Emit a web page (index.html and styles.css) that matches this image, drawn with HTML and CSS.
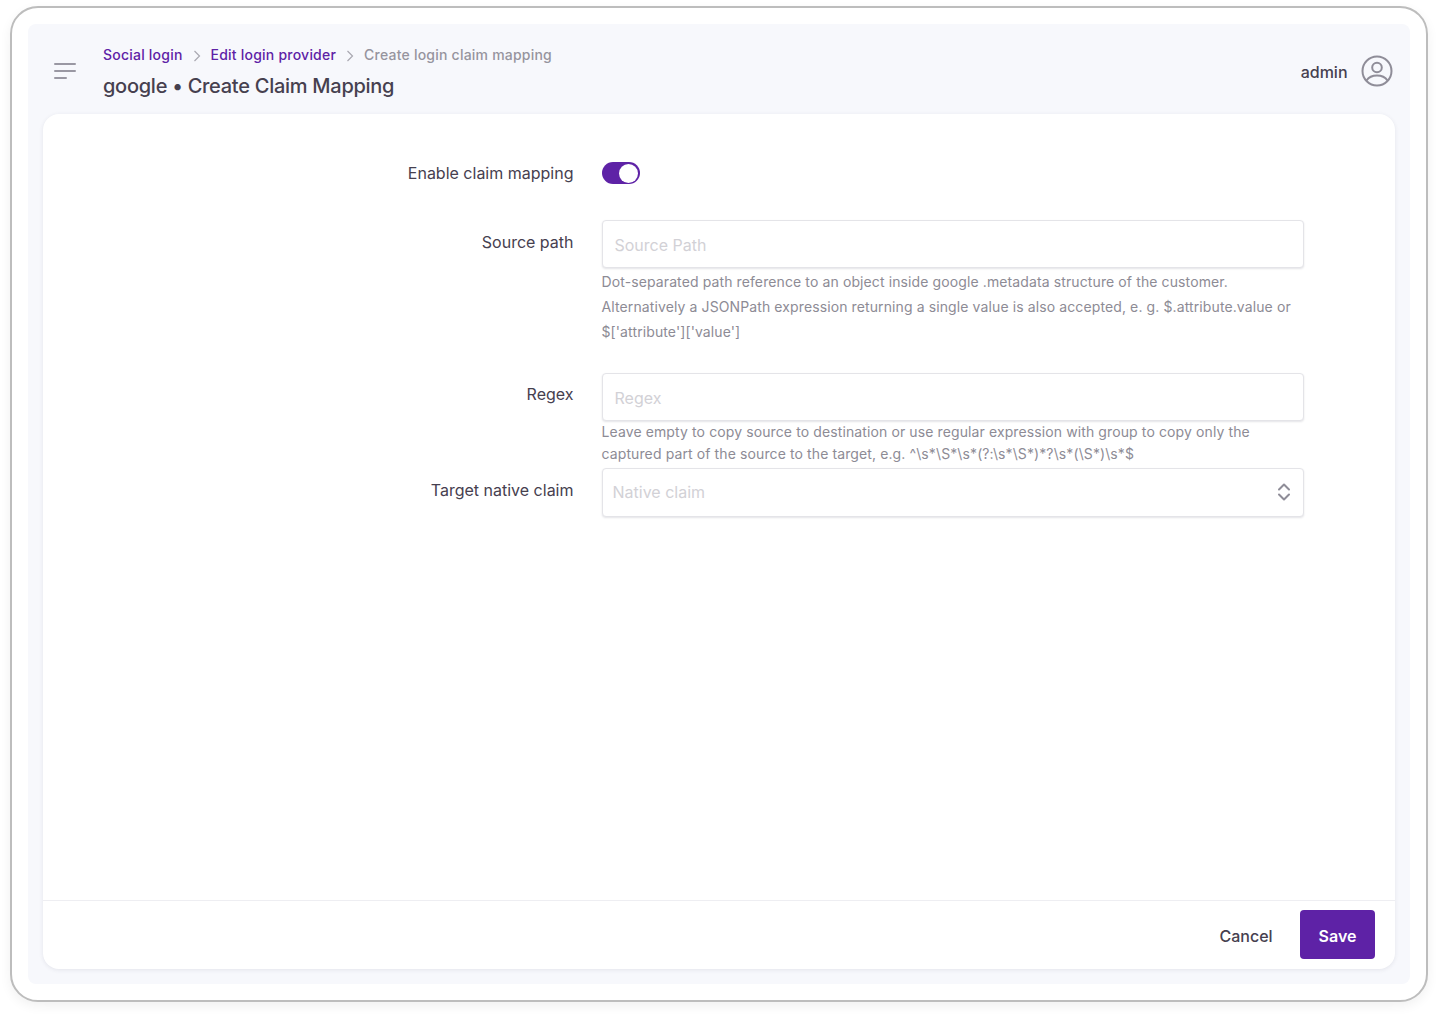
FILE: index.html
```html
<!DOCTYPE html>
<html lang="en">
<head>
<meta charset="utf-8">
<title>google • Create Claim Mapping</title>
<link rel="stylesheet" href="styles.css">
</head>
<body>
<div class="frame">
  <div class="shell">
    <header class="topbar">
      <svg class="menu-icon" width="22" height="18" viewBox="0 0 22 18"><path d="M1 2h20M1 9h20M1 16h11" fill="none" stroke="#9a98a3" stroke-width="2" stroke-linecap="round"/></svg>
      <div class="heading">
        <nav class="crumbs">
          <a class="crumb-link">Social login</a>
          <svg class="chev" width="8" height="12" viewBox="0 0 8 12"><path d="M1.500 1 6.500 6l-5 5" fill="none" stroke="#a9a8b0" stroke-width="1.200"/></svg>
          <a class="crumb-link">Edit login provider</a>
          <svg class="chev" width="8" height="12" viewBox="0 0 8 12"><path d="M1.500 1 6.500 6l-5 5" fill="none" stroke="#a9a8b0" stroke-width="1.200"/></svg>
          <span class="crumb-current">Create login claim mapping</span>
        </nav>
        <h1 class="title">google • Create Claim Mapping</h1>
      </div>
      <div class="user">
        <span class="user-name">admin</span>
        <svg width="32" height="32" viewBox="0 0 32 32" fill="none" stroke="#8f8d98" stroke-width="2"><circle cx="16" cy="16" r="14.500"/><circle cx="16" cy="12.500" r="4.800"/><path d="M5.500 25.500C8 21.800 12 20.500 16 20.500s8 1.300 10.500 5"/></svg>
      </div>
    </header>
    <main class="card">
      <form class="form">
        <div class="row row-toggle">
          <label class="label">Enable claim mapping</label>
          <div class="control"><span class="toggle"><span class="knob"></span></span></div>
        </div>
        <div class="row row-source">
          <label class="label">Source path</label>
          <div class="control">
            <div class="input">Source Path</div>
            <p class="help help-wide">Dot-separated path reference to an object inside google .metadata structure of the customer. Alternatively a JSONPath expression returning a single value is also accepted, e. g. $.attribute.value or $['attribute']['value']</p>
          </div>
        </div>
        <div class="row row-regex">
          <label class="label">Regex</label>
          <div class="control">
            <div class="input">Regex</div>
            <p class="help help-tight">Leave empty to copy source to destination or use regular expression with group to copy only the captured part of the source to the target, e.g. ^\s*\S*\s*(?:\s*\S*)*?\s*(\S*)\s*$</p>
          </div>
        </div>
        <div class="row row-target">
          <label class="label">Target native claim</label>
          <div class="control">
            <div class="input input-select">
              <span>Native claim</span>
              <svg width="14" height="20" viewBox="0 0 14 20" fill="none" stroke="#8f8d98" stroke-width="2" stroke-linecap="round" stroke-linejoin="round"><path d="M2 7.500 7 2.500l5 5M2 12.500l5 5 5-5"/></svg>
            </div>
          </div>
        </div>
      </form>
      <footer class="actions">
        <button class="btn btn-cancel" type="button">Cancel</button>
        <button class="btn btn-save" type="button">Save</button>
      </footer>
    </main>
  </div>
</div>
</body>
</html>
```

FILE: styles.css
```css
* { box-sizing: border-box; }
html, body { margin: 0; height: 100%; background: #fff; }
body {
  padding: 6px 10px 14px 10px;
  font-family: Inter, "Liberation Sans", sans-serif;
  color: #46404f;
}
.frame {
  height: 996px;
  width: 1418px;
  border: 2px solid #bdbdbd;
  border-radius: 28px;
  padding: 16px 16.500px 16px 15.500px;
  background: #fff;
  box-shadow: 0 4px 12px rgba(0,0,0,.06);
}
.shell {
  height: 100%;
  background: #f7f8fc;
  border-radius: 8px;
  padding: 0 15px 15px;
  display: flex;
  flex-direction: column;
}
.topbar {
  height: 90px;
  flex: none;
  display: flex;
  align-items: center;
  padding-left: 11.500px;
}
.menu-icon { flex: none; margin: 4px 27px 0 0; }
.heading { flex: 1; display: flex; flex-direction: column; gap: 6px; padding-top: 5px; }
.crumbs { display: flex; align-items: center; font-size: 14px; line-height: 22px; font-weight: 500; letter-spacing: .22px; }
.crumb-link { color: #5e22a6; }
.crumb-current { color: #96949e; }
.chev { margin: 2px 10px 0 10px; }
.title { margin: 0; font-size: 20px; line-height: 28px; font-weight: 500; color: #46404f; letter-spacing: -.27px; }
.user { display: flex; align-items: center; gap: 13px; margin: 4px 2px 0 0; }
.user-name { font-size: 16px; font-weight: 500; margin-top: 2px; }
.card {
  flex: 1;
  background: #fff;
  border-radius: 16px;
  box-shadow: 0 1px 4px rgba(60,60,90,.1);
  display: flex;
  flex-direction: column;
}
.form { flex: 1; padding-top: 45px; }
.row {
  display: grid;
  grid-template-columns: 531px 702px;
  column-gap: 28px;
  font-size: 16px;
}
.row-toggle { margin-bottom: 33px; }
.row-source { margin-bottom: 28px; }
.row-regex { margin-bottom: 3px; }
.label { text-align: right; line-height: 28px; color: #46404f; }
.row-source .label, .row-regex .label { padding-top: 7.500px; }
.row-target .label { padding-top: 8px; }
.control { min-width: 0; }
.toggle {
  width: 38px;
  height: 22px;
  background: #5e22a6;
  border-radius: 11px;
  padding: 1.500px 2px;
  margin: 3px 0 0 .500px;
  display: flex;
  justify-content: flex-end;
}
.knob { width: 19px; height: 19px; border-radius: 50%; background: #fff; }
.input {
  height: 48px;
  border: 1px solid #e4e4e8;
  border-radius: 4px;
  box-shadow: 0 1px 2px rgba(30,30,60,.12);
  background: #fff;
  color: #d2d1d6;
  font-size: 16px;
  display: flex;
  align-items: center;
  padding: 2px 12px 0;
}
.input-select { justify-content: space-between; height: 49px; padding: 0 12px 0 10px; }
.help { margin: 0; font-size: 14px; color: #8d8b95; letter-spacing: .11px; }
.help-wide { line-height: 25.200px; padding-top: 1px; }
.help-tight { line-height: 22px; }
.actions {
  flex: none;
  height: 69px;
  border-top: 1px solid #eeeef2;
  display: flex;
  align-items: center;
  justify-content: flex-end;
  gap: 9px;
  padding: 0 19.500px 2px 0;
}
.btn {
  font: 600 16px Inter, "Liberation Sans", sans-serif;
  height: 49px;
  border: 0;
  border-radius: 4px;
  padding: 3px 18.500px 0;
  background: transparent;
}
.btn-cancel { color: #46404f; font-weight: 500; }
.btn-save { background: #5e22a6; color: #fff; }
```
